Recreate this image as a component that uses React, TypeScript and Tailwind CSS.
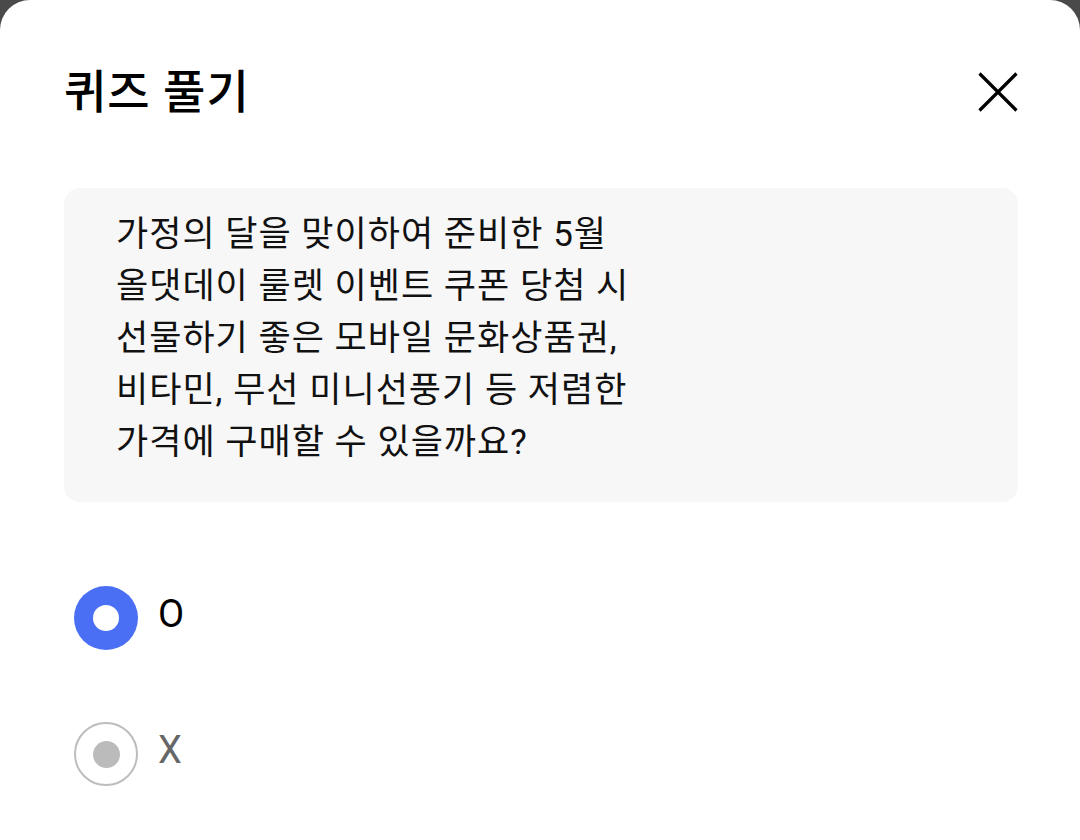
import { useState } from "react";

const question = [
  "가정의 달을 맞이하여 준비한 5월",
  "올댓데이 룰렛 이벤트 쿠폰 당첨 시",
  "선물하기 좋은 모바일 문화상품권,",
  "비타민, 무선 미니선풍기 등 저렴한",
  "가격에 구매할 수 있을까요?",
];

const font = "font-['Roboto','Noto_Sans_CJK_KR',sans-serif]";

function Radio({ checked, label, onClick }: { checked: boolean; label: string; onClick: () => void }) {
  return (
    <button onClick={onClick} className="flex items-center gap-[20px] ml-[10px] text-left">
      {checked ? (
        <span className="w-[64px] h-[64px] rounded-full bg-[#4a6ff5] flex items-center justify-center">
          <span className="w-[26px] h-[26px] rounded-full bg-white" />
        </span>
      ) : (
        <span className="w-[64px] h-[64px] rounded-full border-2 border-[#bdbdbd] flex items-center justify-center">
          <span className="w-[27px] h-[27px] rounded-full bg-[#bbbbbb]" />
        </span>
      )}
      <span
        className={`${font} text-[38px] leading-none mb-[8px] ${checked ? "text-black" : "text-[#666666]"}`}
      >
        {label}
      </span>
    </button>
  );
}

export default function App() {
  const [answer, setAnswer] = useState("O");

  return (
    <div className={`w-[1080px] h-[840px] bg-[#4a4a4a] overflow-hidden ${font}`}>
      <div className="h-full bg-white rounded-t-[30px] pl-[64px] pr-[62px]">
        {/* header */}
        <div className="flex items-center justify-between h-[60px] pt-[62px] box-content">
          <h1 className="text-[46px] font-medium text-black tracking-[1px]">퀴즈 풀기</h1>
          <button aria-label="close" className="w-[40px] h-[40px]">
            <svg width="40" height="40" viewBox="0 0 40 40" fill="none">
              <path d="M1.5 1.5l37 37M38.5 1.5l-37 37" stroke="#000" strokeWidth="3.2" />
            </svg>
          </button>
        </div>

        {/* question */}
        <div className="mt-[66px] rounded-[16px] bg-[#f7f7f7] pl-[52px] pt-[21px] pb-[33px]">
          {question.map((line) => (
            <p key={line} className="text-[35px] leading-[52px] tracking-[1px] text-[#111111]">
              {line}
            </p>
          ))}
        </div>

        {/* answers */}
        <div className="mt-[84px] flex flex-col gap-[72px]">
          <Radio checked={answer === "O"} label="O" onClick={() => setAnswer("O")} />
          <Radio checked={answer === "X"} label="X" onClick={() => setAnswer("X")} />
        </div>
      </div>
    </div>
  );
}
